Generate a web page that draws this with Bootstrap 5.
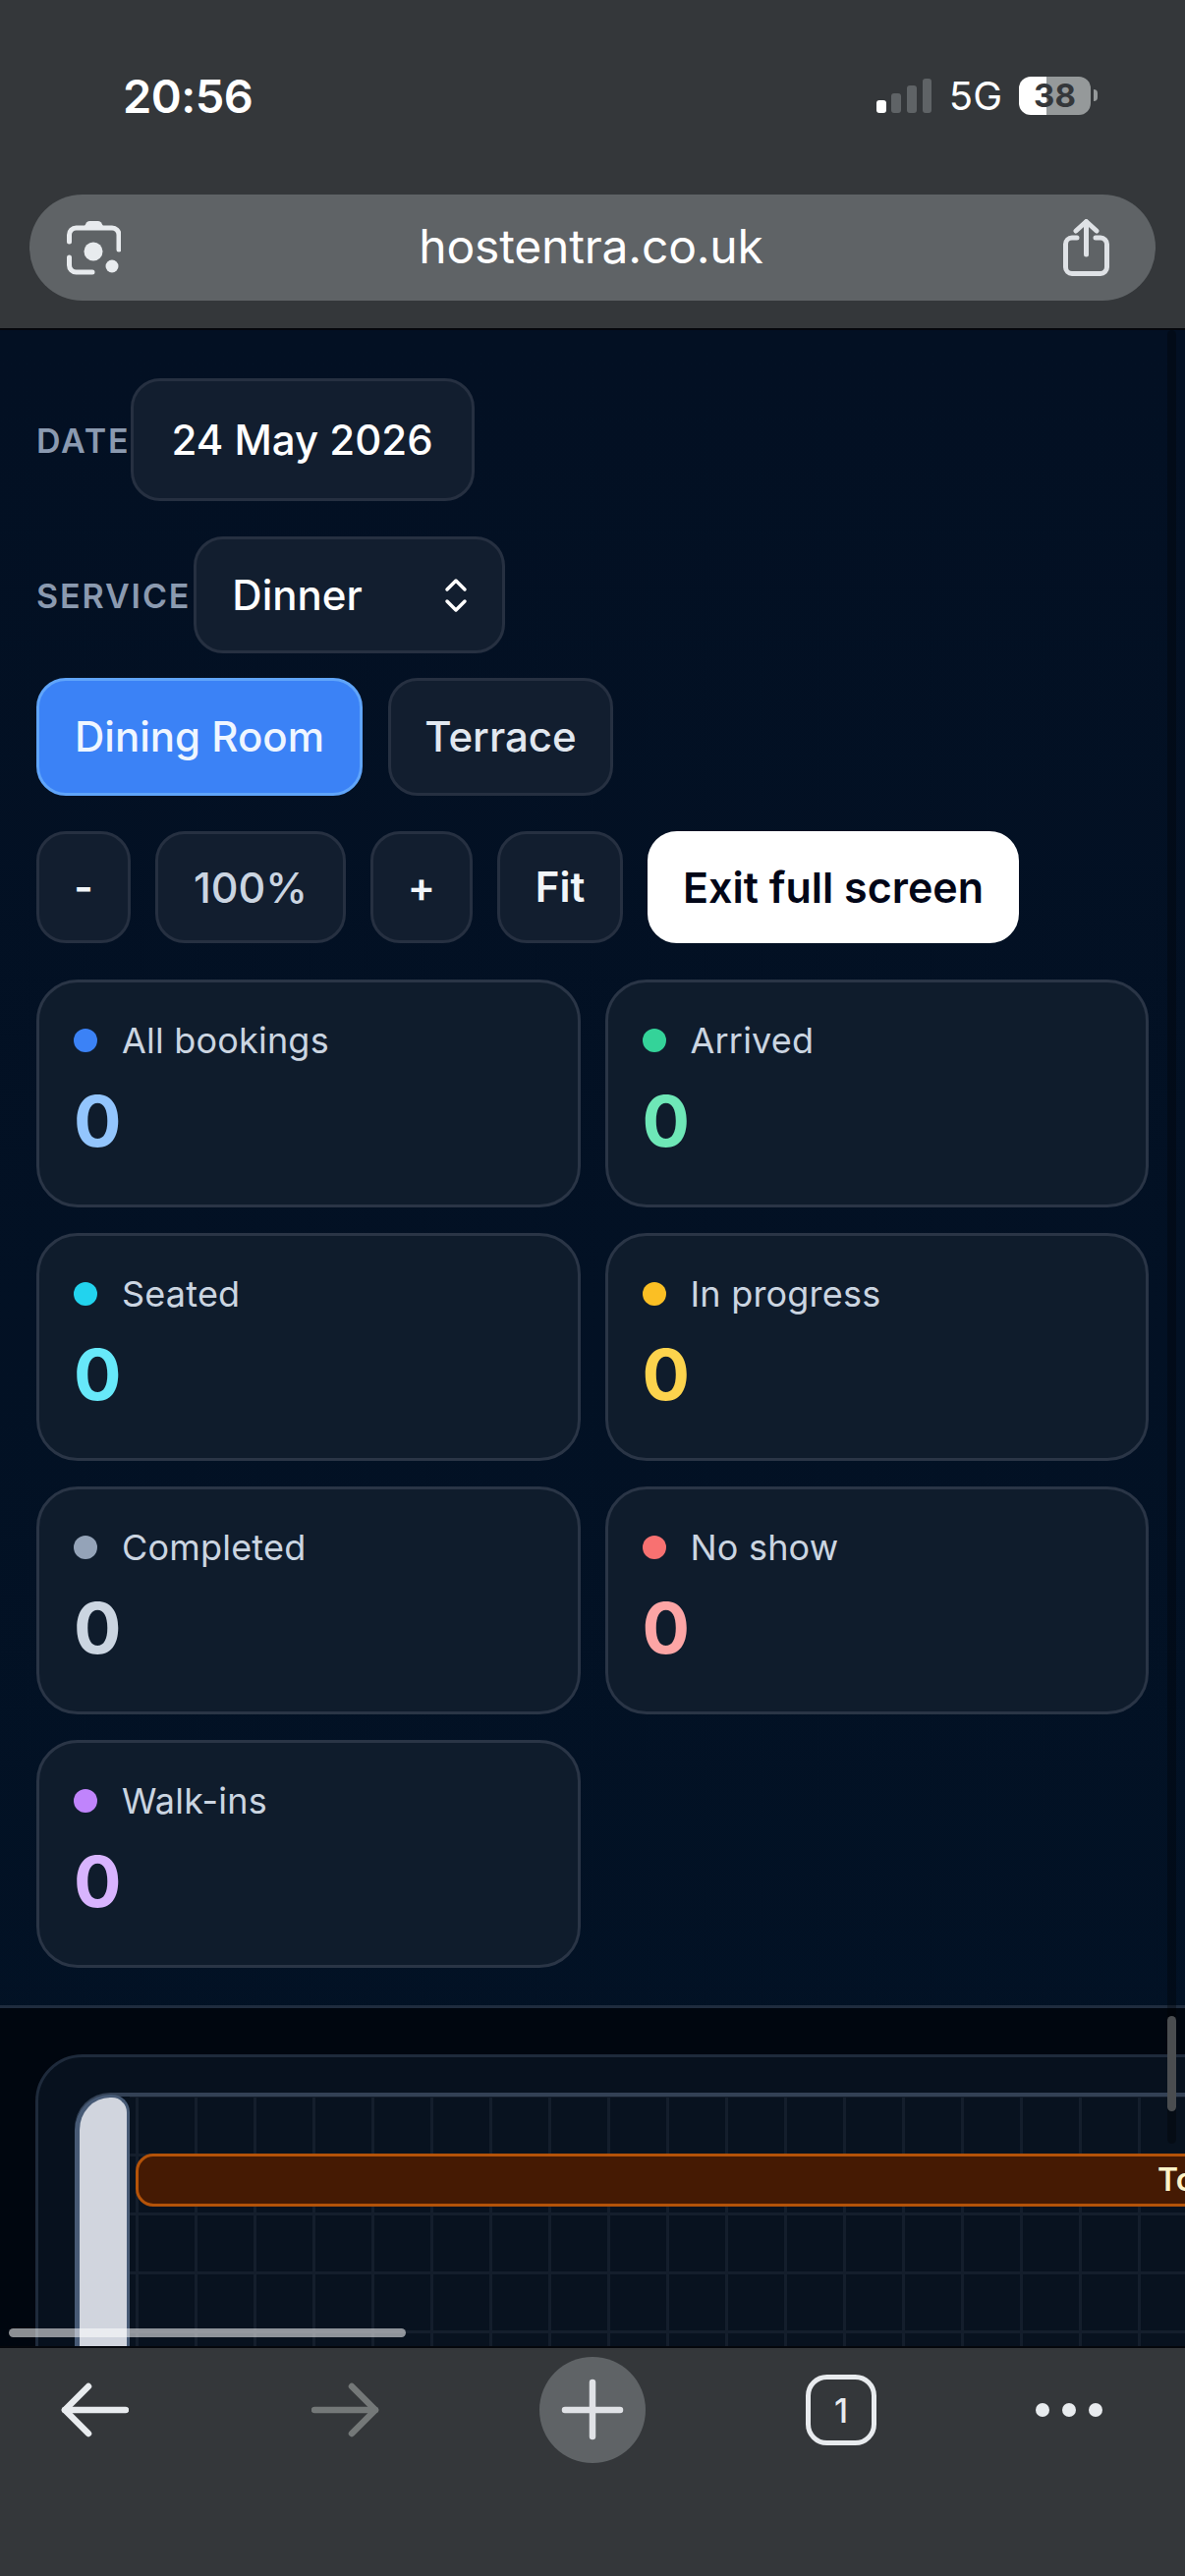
<!doctype html>
<html lang="en">
<head>
<meta charset="utf-8">
<title>hostentra.co.uk</title>
<link href="https://cdn.jsdelivr.net/npm/bootstrap@5.3.0/dist/css/bootstrap.min.css" rel="stylesheet">
<style>
html,body{margin:0;height:2622px;overflow:hidden;background:#34373a}
body{width:1206px;font-family:Inter,"Liberation Sans",sans-serif}
.shell{height:2622px}
.chrome-top{height:336px;background:#34373a;border-bottom:2px solid #05070c;flex:none}
.status-row{height:194px;padding-left:125px;padding-right:89px}
.clock{font-size:47px;font-weight:600;color:#fff;letter-spacing:-.5px;line-height:1}
.net{font-size:40px;color:#fff;line-height:1;margin:2px 17px 0 18px}
.batt{width:73px;height:39px;border-radius:12px;background:linear-gradient(90deg,#fff 0 28px,#95999a 28px);color:#34373a;font-size:33px;font-weight:700;line-height:39px;text-align:center}
.batt-tip{width:4px;height:12px;margin-left:3px;background:#95999a;border-radius:0 6px 6px 0}
.url-bar{margin:4px 30px 0;height:108px;border-radius:54px;background:#5f6366;padding:0 47px 0 38px}
.url-text{font-size:48px;color:#fff;line-height:1;letter-spacing:-.2px;flex:1;text-align:center;padding-right:2px;margin-top:-3px}
.app{flex:1 1 0;min-height:0;background:linear-gradient(180deg,#031023,#021225);overflow:hidden}
.top-part{padding:49px 37px 0}
.field-row{margin-bottom:37px}
.field-row-first{margin-bottom:36px}
.fld-label{font-size:34px;font-weight:600;letter-spacing:1.9px;color:#8b9ab0;line-height:1;margin-top:2px}
.ctl{background:#121e2f;border:3px solid #263041;border-radius:30px;color:#fff;font-size:42px;font-weight:500;line-height:1;font-family:inherit}
.ctl:hover,.ctl:active{background:#121e2f;border-color:#263041;color:#fff}
.ctl-date{width:350px;height:125px;padding:0}
.ctl-select{width:317px;height:119px;margin-left:3px;padding:0 35px 0 36px}
.tabs-row{gap:26px;margin-top:-12px;margin-bottom:36px}
.tab-btn{height:120px;padding:0;color:#e2e8f0}
.tab-w1{width:332px}.tab-w2{width:229px}
.tab-btn.is-on{background:#3b82f6;border-color:#60a5fa;color:#eff6ff}
.zoom-row{gap:25px;margin-bottom:37px}
.z-btn{height:114px;padding:0;color:#cbd5e1;font-size:42px}
.z-w1{width:96px;font-weight:600;color:#f1f5f9}.z-w2{width:194px;font-size:43px}.z-w3{width:104px;font-weight:600;color:#f1f5f9}.z-w4{width:128px;color:#f1f5f9;font-weight:600}
.z-exit{width:378px;background:#fff;border-color:#fff;color:#020617;font-weight:600;font-size:43px}
.z-exit:hover,.z-exit:active{background:#fff;border-color:#fff;color:#020617}
.stat-grid{--bs-gutter-x:25px;--bs-gutter-y:26px}
.stat{height:232px;background:#0f1c2c;border:3px solid #2a3546;border-radius:42px;padding:41px 35px 0}
.stat-head{gap:25px;height:36px}
.dot{width:24px;height:24px;border-radius:50%;flex:none}
.stat-name{font-size:36px;color:#cbd5e1;line-height:1;letter-spacing:.2px;margin-top:-1px}
.stat-val{font-size:72px;font-weight:700;line-height:1;margin-top:28px}
.d-blue{background:#3b82f6}.d-green{background:#34d399}.d-cyan{background:#22d3ee}.d-amber{background:#fbbf24}.d-slate{background:#94a3b8}.d-red{background:#f87171}.d-purple{background:#c084fc}
.v-blue{color:#93c5fd}.v-green{color:#6ee7b7}.v-cyan{color:#67e8f9}.v-amber{color:#fcd34d}.v-slate{color:#cbd5e1}.v-red{color:#fca5a5}.v-purple{color:#d8b4fe}
.board-wrap{margin-top:38px;border-top:3px solid #1f2c3e;background:#00060f;padding:47px 0 0 36px;flex:1 1 0;min-height:0;overflow:hidden}
.board{height:400px;width:1300px;background:#07111e;border:3px solid #1e2a3b;border-radius:48px 0 0 0;padding:36px 0 0 37px}
.plan{border-top:4px solid #334155;border-radius:36px 0 0 0;height:400px}
.rail{width:56px;flex:none;margin-top:-2px;height:400px;background:#d1d5de;border:solid #475a75;border-width:3px 3px 0 5px;border-radius:36px 18px 0 0}
.cells{flex:1;background-color:#08121f;background-image:linear-gradient(90deg,#141e2c 3px,transparent 3px),linear-gradient(180deg,#141e2c 3px,transparent 3px);background-size:60px 60px;background-position:6px 0,0 58px;padding:58px 0 0 6px}
.slot{height:54px;background:#451a03;border:3px solid #b45309;border-radius:18px;padding-left:1037px;color:#fef3c7;font-size:32px;font-weight:600;line-height:48px;white-space:nowrap}
.hbar{left:9px;top:2370px;width:404px;height:9px;border-radius:5px;background:rgba(255,255,255,.55)}
.vtrack{left:1188px;top:336px;width:9px;height:1846px;border-radius:5px;background:rgba(0,0,0,.3)}
.vthumb{left:1188px;top:2052px;width:9px;height:97px;border-radius:5px;background:#4a4d50}
.toolbar{height:234px;flex:none;background:#34373a;border-top:2px solid #05070c;padding:9px 0 0 60px;gap:163px}
.toolbar svg{display:block}
.ti-back{margin-top:26px;margin-right:20px}
.ti-fwd{margin-top:26px;margin-left:3px}
.ti-new{margin-left:-2px}
.ti-tabs{margin-top:18px}
.ti-more{margin-top:46px;margin-left:-1px}
.tab-num{font-family:Inter,sans-serif;font-size:34px;font-weight:500;fill:#e8ebee}
</style>
</head>
<body>
<div class="shell d-flex flex-column position-relative">
  <header class="chrome-top">
    <div class="status-row d-flex align-items-center">
      <span class="clock">20:56</span>
      <div class="ms-auto d-flex align-items-center">
        <svg width="56" height="35" viewBox="0 0 56 35"><rect x="0" y="22" width="10" height="13" rx="3" fill="#fff"/><rect x="15" y="15" width="10" height="20" rx="3" fill="#5f6366"/><rect x="31" y="7" width="10" height="28" rx="3" fill="#5f6366"/><rect x="47" y="0" width="9" height="35" rx="3" fill="#5f6366"/></svg>
        <span class="net">5G</span>
        <span class="batt">38</span><span class="batt-tip"></span>
      </div>
    </div>
    <div class="url-bar d-flex align-items-center">
      <svg width="55" height="55" viewBox="0 0 55 55" fill="none" stroke="#e8ebee" stroke-width="5" stroke-linecap="round"><path d="M2.500 21V14a7 7 0 0 1 7-7H46a7 7 0 0 1 7 7V29"/><path d="M2.500 37V45a7 7 0 0 0 7 7H26"/><path d="M17 7 L20 1.500Q21 0 23 0H32Q34 0 35 1.500L38 7Z" fill="#e8ebee" stroke="none"/><circle cx="27" cy="31" r="9.500" fill="#e8ebee" stroke="none"/><circle cx="46" cy="46" r="6.500" fill="#e8ebee" stroke="none"/></svg>
      <span class="url-text">hostentra.co.uk</span>
      <svg width="47" height="58" viewBox="0 0 47 58" fill="none" stroke="#dfe2e6" stroke-width="5" stroke-linecap="round" stroke-linejoin="round"><path d="M14 19H9a6.500 6.500 0 0 0-6.500 6.500V49A6.500 6.500 0 0 0 9 55.500H38a6.500 6.500 0 0 0 6.500-6.500V25.500A6.500 6.500 0 0 0 38 19H33"/><path d="M23.500 36V3"/><path d="M13 12L23.500 2.500L34 12"/></svg>
    </div>
  </header>

  <main class="app d-flex flex-column">
    <div class="top-part">
      <div class="d-flex align-items-center field-row-first">
        <span class="fld-label">DATE</span>
        <button type="button" class="btn ctl ctl-date">24 May 2026</button>
      </div>
      <div class="d-flex align-items-center field-row">
        <span class="fld-label">SERVICE</span>
        <button type="button" class="btn ctl ctl-select d-flex align-items-center justify-content-between">
          <span>Dinner</span>
          <svg width="24" height="36" viewBox="0 0 24 36" fill="none" stroke="#fff" stroke-width="3.500" stroke-linecap="round" stroke-linejoin="round"><path d="M3 12L12 3L21 12"/><path d="M3 24L12 33L21 24"/></svg>
        </button>
      </div>
      <div class="d-flex tabs-row">
        <button type="button" class="btn ctl tab-btn tab-w1 is-on">Dining Room</button>
        <button type="button" class="btn ctl tab-btn tab-w2">Terrace</button>
      </div>
      <div class="d-flex zoom-row">
        <button type="button" class="btn ctl z-btn z-w1">-</button>
        <button type="button" class="btn ctl z-btn z-w2">100%</button>
        <button type="button" class="btn ctl z-btn z-w3">+</button>
        <button type="button" class="btn ctl z-btn z-w4">Fit</button>
        <button type="button" class="btn ctl z-btn z-exit">Exit full screen</button>
      </div>
      <div class="row stat-grid">
        <div class="col-6"><div class="stat"><div class="stat-head d-flex align-items-center"><span class="dot d-blue"></span><span class="stat-name">All bookings</span></div><div class="stat-val v-blue">0</div></div></div>
        <div class="col-6"><div class="stat"><div class="stat-head d-flex align-items-center"><span class="dot d-green"></span><span class="stat-name">Arrived</span></div><div class="stat-val v-green">0</div></div></div>
        <div class="col-6"><div class="stat"><div class="stat-head d-flex align-items-center"><span class="dot d-cyan"></span><span class="stat-name">Seated</span></div><div class="stat-val v-cyan">0</div></div></div>
        <div class="col-6"><div class="stat"><div class="stat-head d-flex align-items-center"><span class="dot d-amber"></span><span class="stat-name">In progress</span></div><div class="stat-val v-amber">0</div></div></div>
        <div class="col-6"><div class="stat"><div class="stat-head d-flex align-items-center"><span class="dot d-slate"></span><span class="stat-name">Completed</span></div><div class="stat-val v-slate">0</div></div></div>
        <div class="col-6"><div class="stat"><div class="stat-head d-flex align-items-center"><span class="dot d-red"></span><span class="stat-name">No show</span></div><div class="stat-val v-red">0</div></div></div>
        <div class="col-6"><div class="stat"><div class="stat-head d-flex align-items-center"><span class="dot d-purple"></span><span class="stat-name">Walk-ins</span></div><div class="stat-val v-purple">0</div></div></div>
      </div>
    </div>
    <div class="board-wrap">
      <div class="board">
        <div class="plan d-flex">
          <div class="rail"></div>
          <div class="cells"><div class="slot">To</div></div>
        </div>
      </div>
    </div>
    <div class="position-absolute vtrack"></div>
    <div class="position-absolute vthumb"></div>
    <div class="position-absolute hbar"></div>
  </main>

  <nav class="toolbar d-flex align-items-start">
    <svg class="ti-back" width="71" height="56" viewBox="0 0 71 56" fill="none" stroke="#e8ebee" stroke-width="6.500" stroke-linecap="round" stroke-linejoin="round"><path d="M68 28H6"/><path d="M30 4L6 28L30 52"/></svg>
    <svg class="ti-fwd" width="71" height="56" viewBox="0 0 71 56" fill="none" stroke="#747878" stroke-width="6.500" stroke-linecap="round" stroke-linejoin="round"><path d="M3 28H65"/><path d="M41 4L65 28L41 52"/></svg>
    <svg class="ti-new" width="108" height="108" viewBox="0 0 108 108"><circle cx="54" cy="54" r="54" fill="#5f6366"/><path d="M54 26V81M26 54H82" stroke="#e0e2e6" stroke-width="6.500" stroke-linecap="round"/></svg>
    <svg class="ti-tabs" width="72" height="72" viewBox="0 0 72 72" fill="none"><rect x="2.500" y="2.500" width="67" height="67" rx="19" stroke="#e8ebee" stroke-width="5"/><text class="tab-num" x="36" y="49" text-anchor="middle">1</text></svg>
    <svg class="ti-more" width="68" height="16" viewBox="0 0 68 16" fill="#e8ebee"><circle cx="7" cy="8" r="7"/><circle cx="34" cy="8" r="7"/><circle cx="61" cy="8" r="7"/></svg>
  </nav>
</div>
<script src="https://cdn.jsdelivr.net/npm/bootstrap@5.3.0/dist/js/bootstrap.bundle.min.js"></script>
</body>
</html>
